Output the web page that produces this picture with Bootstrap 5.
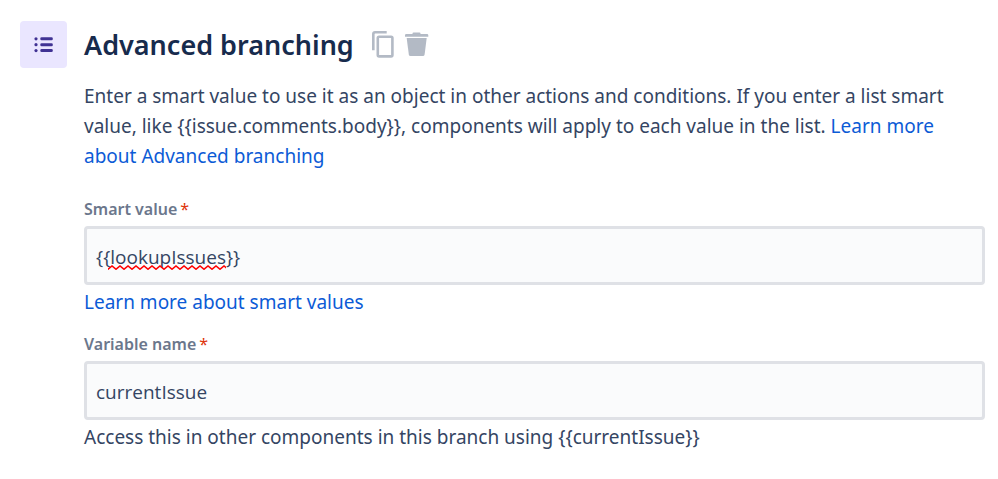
<!DOCTYPE html>
<html lang="en">
<head>
<meta charset="utf-8">
<meta name="viewport" content="width=device-width, initial-scale=1">
<title>Advanced branching</title>
<link href="https://cdn.jsdelivr.net/npm/bootstrap@5.3.0/dist/css/bootstrap.min.css" rel="stylesheet">
<style>
body { font-family: "Noto Sans", "Open Sans", sans-serif; font-size: 19px; line-height: 30px; color: #344563; }
.rule { padding: 21px 13px 21px 20px; column-gap: 17px; }
.rule-icon { width: 47px; height: 47px; background: #eae6ff; border-radius: 4px; }
.rule-header { margin-bottom: 12px; }
.rule-title { font-size: 27px; line-height: 48px; font-weight: 600; color: #172b4d; }
.rule-action { line-height: 0; }
.rule a { color: #0c5bd6; }
.rule-text { margin-bottom: 27px; }
.field + .field { margin-top: 16px; }
.field-label { font-size: 16px; line-height: 22px; font-weight: 600; color: #6b778c; margin-bottom: 6px; }
.field-required { color: #de350b; font-weight: 400; margin-left: 3px; }
.field .form-control { height: 59px; padding: 2px 9px 0; font-family: "Open Sans", "Noto Sans", sans-serif; font-size: 19px; line-height: 30px; color: #344563; background: #fafbfc; border: 3px solid #dfe1e6; border-radius: 4px; }
.spelling { left: 24px; bottom: 15px; pointer-events: none; }
.field-help { margin-top: 2px; }
</style>
</head>
<body class="bg-white">
<main class="rule d-flex align-items-start">
  <div class="rule-icon d-flex align-items-center justify-content-center flex-shrink-0">
    <svg width="20" height="18" viewBox="0 0 20 18" fill="#403294" aria-hidden="true">
      <circle cx="2" cy="2.8" r="1.6"/><circle cx="2" cy="8.7" r="1.6"/><circle cx="2" cy="14.6" r="1.6"/>
      <rect x="6.3" y="1.3" width="12.5" height="3" rx="1.3"/><rect x="6.3" y="7.2" width="12.5" height="3" rx="1.3"/><rect x="6.3" y="13.1" width="12.5" height="3" rx="1.3"/>
    </svg>
  </div>
  <div class="flex-grow-1">
    <div class="rule-header d-flex align-items-center">
      <h1 class="rule-title mb-0 me-3">Advanced branching</h1>
      <button type="button" class="rule-action btn p-0 border-0 me-2" aria-label="Duplicate">
        <svg width="26" height="28" viewBox="0 0 26 28" fill="none" stroke="#b3bac5" stroke-width="2.6">
          <path d="M3.3 19.3V3Q3.3 1.3 5 1.3H16.7"/>
          <rect x="7.8" y="5.8" width="14.6" height="19.6" rx="1.3"/>
        </svg>
      </button>
      <button type="button" class="rule-action btn p-0 border-0" aria-label="Delete">
        <svg width="26" height="28" viewBox="0 0 26 28" fill="#b3bac5">
          <path d="M8.500 2.600Q8.500 1.600 9.500 1.600H15.500Q16.500 1.600 16.500 2.600V3H23Q24.300 3 24.300 4.300V5.700H1V4.300Q1 3 2.300 3H8.500Z"/>
          <path d="M2.700 7H22.700L20.600 23.500Q20.400 25 18.900 25H6.500Q5 25 4.800 23.500Z"/>
        </svg>
      </button>
    </div>
    <p class="rule-text">Enter a smart value to use it as an object in other actions and conditions. If you enter a list smart value, like {{issue.comments.body}}, components will apply to each value in the list. <a href="#" class="text-decoration-none">Learn more about Advanced branching</a></p>
    <div class="field">
      <label class="field-label d-block" for="smart-value">Smart value<span class="field-required">*</span></label>
      <div class="position-relative">
        <input class="form-control" id="smart-value" type="text" value="{{lookupIssues}}" spellcheck="false" required>
        <svg class="spelling position-absolute" width="118" height="5" aria-hidden="true">
          <defs><pattern id="wave" width="8" height="5" patternUnits="userSpaceOnUse"><path d="M-1 5L4 1L9 5" fill="none" stroke="#f00" stroke-width="1.6"/></pattern></defs>
          <rect width="118" height="5" fill="url(#wave)"/>
        </svg>
      </div>
      <div class="field-help"><a href="#" class="text-decoration-none">Learn more about smart values</a></div>
    </div>
    <div class="field">
      <label class="field-label d-block" for="variable-name">Variable name<span class="field-required">*</span></label>
      <input class="form-control" id="variable-name" type="text" value="currentIssue" spellcheck="false" required>
      <div class="field-help">Access this in other components in this branch using {{currentIssue}}</div>
    </div>
  </div>
</main>
<script src="https://cdn.jsdelivr.net/npm/bootstrap@5.3.0/dist/js/bootstrap.bundle.min.js"></script>
</body>
</html>
